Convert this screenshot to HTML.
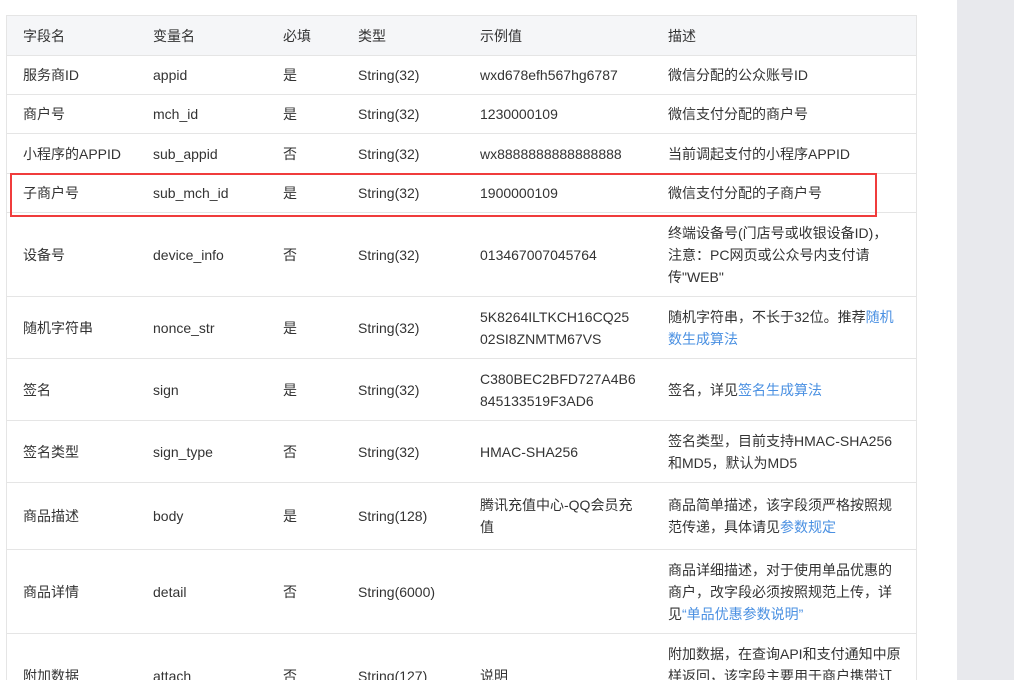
<!DOCTYPE html><html><head><meta charset="utf-8"><style>
html,body{margin:0;width:1014px;height:680px;overflow:hidden}
body{background:#fff;font-family:"Liberation Sans","Noto Sans CJK SC",sans-serif;font-size:14px;color:#333;position:relative}
.side{position:absolute;left:957px;top:0;width:57px;height:680px;background:#e8e9ed}
.tb{position:absolute;left:6px;top:15px;width:909px;border:1px solid #e5e5e5;border-bottom:none}
.r{position:relative;border-bottom:1px solid #e5e5e5;box-sizing:border-box}
.r.h{background:#f5f6f8}
.c{position:absolute;top:0;bottom:0;display:flex;align-items:center;line-height:22px;white-space:nowrap}
.a{color:#4a90e2}
.box{position:absolute;left:10px;top:173px;width:867px;height:44px;border:2px solid #f03c3c;box-sizing:border-box}
</style></head><body>
<div class="side"></div>
<div class="tb" id="t"></div>
<div class="box"></div>
<script>
var L=[16,146,276,351,473,661];
var rows=[[40,"字段名","变量名","必填","类型","示例值","描述"],
[39,"服务商ID","appid","是","String(32)","wxd678efh567hg6787","微信分配的公众账号ID"],
[39,"商户号","mch_id","是","String(32)","1230000109","微信支付分配的商户号"],
[40,"小程序的APPID","sub_appid","否","String(32)","wx8888888888888888","当前调起支付的小程序APPID"],
[39,"子商户号","sub_mch_id","是","String(32)","1900000109","微信支付分配的子商户号"],
[84,"设备号","device_info","否","String(32)","013467007045764","终端设备号(门店号或收银设备ID)，<br>注意：PC网页或公众号内支付请<br>传\"WEB\""],
[62,"随机字符串","nonce_str","是","String(32)","5K8264ILTKCH16CQ25<br>02SI8ZNMTM67VS","随机字符串，不长于32位。推荐<span class=a>随机</span><br><span class=a>数生成算法</span>"],
[62,"签名","sign","是","String(32)","C380BEC2BFD727A4B6<br>845133519F3AD6","签名，详见<span class=a>签名生成算法</span>"],
[62,"签名类型","sign_type","否","String(32)","HMAC-SHA256","签名类型，目前支持HMAC-SHA256<br>和MD5，默认为MD5"],
[67,"商品描述","body","是","String(128)","腾讯充值中心-QQ会员充<br>值","商品简单描述，该字段须严格按照规<br>范传递，具体请见<span class=a>参数规定</span>"],
[84,"商品详情","detail","否","String(6000)","","商品详细描述，对于使用单品优惠的<br>商户，改字段必须按照规范上传，详<br>见<span class=a>“单品优惠参数说明”</span>"],
[84,"附加数据","attach","否","String(127)","说明","附加数据，在查询API和支付通知中原<br>样返回，该字段主要用于商户携带订<br>单的自定义数据"]];
var h="";rows.forEach(function(r,i){h+='<div class="r'+(i?'':' h')+'" style="height:'+r[0]+'px">';for(var j=0;j<6;j++)h+='<div class="c" style="left:'+L[j]+'px"><div>'+r[j+1]+'</div></div>';h+='</div>'});
document.getElementById('t').innerHTML=h;
</script>
</body></html>
